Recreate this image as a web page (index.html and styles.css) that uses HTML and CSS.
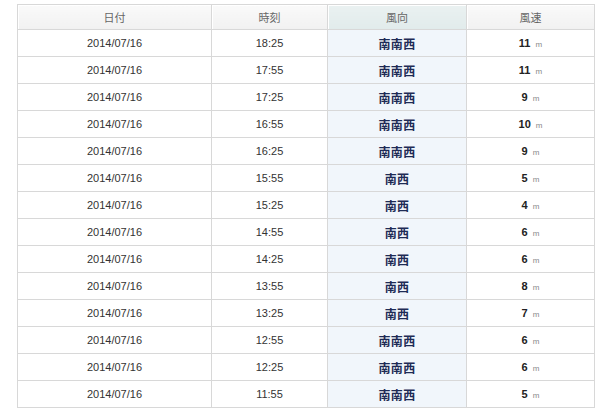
FILE: index.html
```html
<!DOCTYPE html>
<html lang="ja">
<head>
<meta charset="utf-8">
<link rel="stylesheet" href="styles.css">
</head>
<body>
<div class="wrap">
<table class="wind">
<thead>
<tr><th class="c-date">日付</th><th class="c-time">時刻</th><th class="c-dir">風向</th><th class="c-spd">風速</th></tr>
</thead>
<tbody>
<tr><td>2014/07/16</td><td>18:25</td><td class="dir">南南西</td><td class="spd"><b>11</b><span class="u">m</span></td></tr>
<tr><td>2014/07/16</td><td>17:55</td><td class="dir">南南西</td><td class="spd"><b>11</b><span class="u">m</span></td></tr>
<tr><td>2014/07/16</td><td>17:25</td><td class="dir">南南西</td><td class="spd"><b>9</b><span class="u">m</span></td></tr>
<tr><td>2014/07/16</td><td>16:55</td><td class="dir">南南西</td><td class="spd"><b>10</b><span class="u">m</span></td></tr>
<tr><td>2014/07/16</td><td>16:25</td><td class="dir">南南西</td><td class="spd"><b>9</b><span class="u">m</span></td></tr>
<tr><td>2014/07/16</td><td>15:55</td><td class="dir">南西</td><td class="spd"><b>5</b><span class="u">m</span></td></tr>
<tr><td>2014/07/16</td><td>15:25</td><td class="dir">南西</td><td class="spd"><b>4</b><span class="u">m</span></td></tr>
<tr><td>2014/07/16</td><td>14:55</td><td class="dir">南西</td><td class="spd"><b>6</b><span class="u">m</span></td></tr>
<tr><td>2014/07/16</td><td>14:25</td><td class="dir">南西</td><td class="spd"><b>6</b><span class="u">m</span></td></tr>
<tr><td>2014/07/16</td><td>13:55</td><td class="dir">南西</td><td class="spd"><b>8</b><span class="u">m</span></td></tr>
<tr><td>2014/07/16</td><td>13:25</td><td class="dir">南西</td><td class="spd"><b>7</b><span class="u">m</span></td></tr>
<tr><td>2014/07/16</td><td>12:55</td><td class="dir">南南西</td><td class="spd"><b>6</b><span class="u">m</span></td></tr>
<tr><td>2014/07/16</td><td>12:25</td><td class="dir">南南西</td><td class="spd"><b>6</b><span class="u">m</span></td></tr>
<tr><td>2014/07/16</td><td>11:55</td><td class="dir">南南西</td><td class="spd"><b>5</b><span class="u">m</span></td></tr>
</tbody>
</table>
</div>
</body>
</html>
```
FILE: styles.css
```css
html, body {
  margin: 0;
  padding: 0;
  background: #ffffff;
}
.wrap {
  padding: 4px 0 0 17px;
}
.wind {
  border-collapse: collapse;
  width: 577px;
  table-layout: fixed;
  font-family: "Liberation Sans", "Noto Sans CJK JP", sans-serif;
  font-size: 11px;
  color: #333;
}
.wind th, .wind td {
  border: 1px solid #d8d8d8;
  text-align: center;
  padding: 0;
}
.wind th {
  height: 24px;
  font-weight: normal;
  color: #666;
  font-family: "Noto Sans CJK JP", sans-serif;
  font-size: 11px;
  background: linear-gradient(#fafafa, #f1f1f1);
  box-shadow: inset 1px 1px 0 #ffffff;
}
.wind td {
  height: 26px;
  background: #ffffff;
}
.c-date { width: 193px; }
.c-time { width: 115px; }
.c-dir { width: 138px; }
.c-spd { width: 127px; }
.wind th.c-dir {
  background: linear-gradient(#eaf1f1, #e1ebeb);
}
.wind td.dir {
  background: #f1f6fb;
  color: #1e2b55;
  font-weight: bold;
  font-family: "Noto Sans CJK JP", sans-serif;
  font-size: 12px;
  letter-spacing: 0.3px;
}
.spd b {
  font-weight: bold;
  color: #222;
  font-size: 11px;
}
.spd .u {
  font-size: 8px;
  color: #888;
  margin-left: 5px;
}
```
